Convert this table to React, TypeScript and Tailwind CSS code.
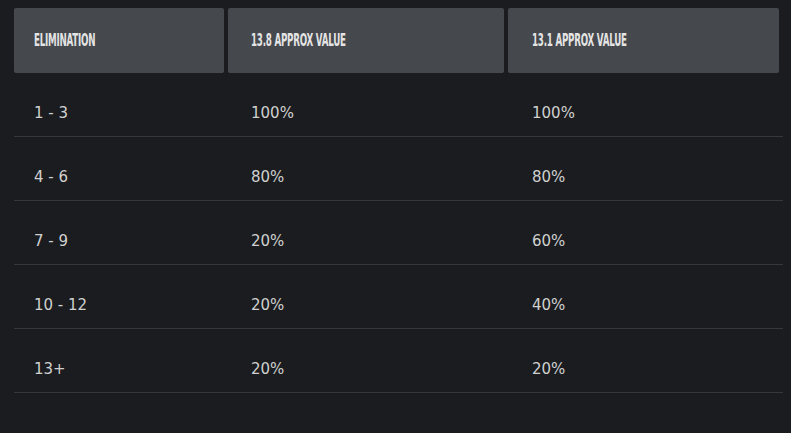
import React from 'react';

const rows = [
  ['1 - 3', '100%', '100%'],
  ['4 - 6', '80%', '80%'],
  ['7 - 9', '20%', '60%'],
  ['10 - 12', '20%', '40%'],
  ['13+', '20%', '20%'],
];

const headFont = { fontFamily: '"Liberation Sans Narrow", "DejaVu Sans Condensed", "Liberation Sans", sans-serif' };

export default function App() {
  return (
    <div className="w-[791px] h-[433px] bg-[#1b1c1f] pt-2 pl-[14px] overflow-hidden" style={{ fontFamily: '"DejaVu Sans", sans-serif' }}>
      <div className="flex gap-1 h-[65px] w-[765px]">
        <div className="w-[210px] bg-[#45484d] rounded-[2px] flex items-center pl-5">
          <span className="text-[17px] font-bold text-[#e4e4e4] uppercase tracking-[-0.4px] scale-x-[0.57] origin-left whitespace-nowrap" style={headFont}>Elimination</span>
        </div>
        <div className="w-[276px] bg-[#45484d] rounded-[2px] flex items-center pl-[23px]">
          <span className="text-[17px] font-bold text-[#e4e4e4] uppercase tracking-[-0.4px] scale-x-[0.57] origin-left whitespace-nowrap" style={headFont}>13.8 Approx Value</span>
        </div>
        <div className="w-[271px] bg-[#45484d] rounded-[2px] flex items-center pl-6">
          <span className="text-[17px] font-bold text-[#e4e4e4] uppercase tracking-[-0.4px] scale-x-[0.57] origin-left whitespace-nowrap" style={headFont}>13.1 Approx Value</span>
        </div>
      </div>
      <div className="w-[769px]">
        {rows.map((r, i) => (
          <div key={i} className="flex h-[64px] items-center pt-[18px] border-b border-[#35373a] text-[15px] text-[#d0d0d0]">
            <div className="w-[237px] pl-5">{r[0]}</div>
            <div className="w-[281px]">{r[1]}</div>
            <div>{r[2]}</div>
          </div>
        ))}
      </div>
    </div>
  );
}
